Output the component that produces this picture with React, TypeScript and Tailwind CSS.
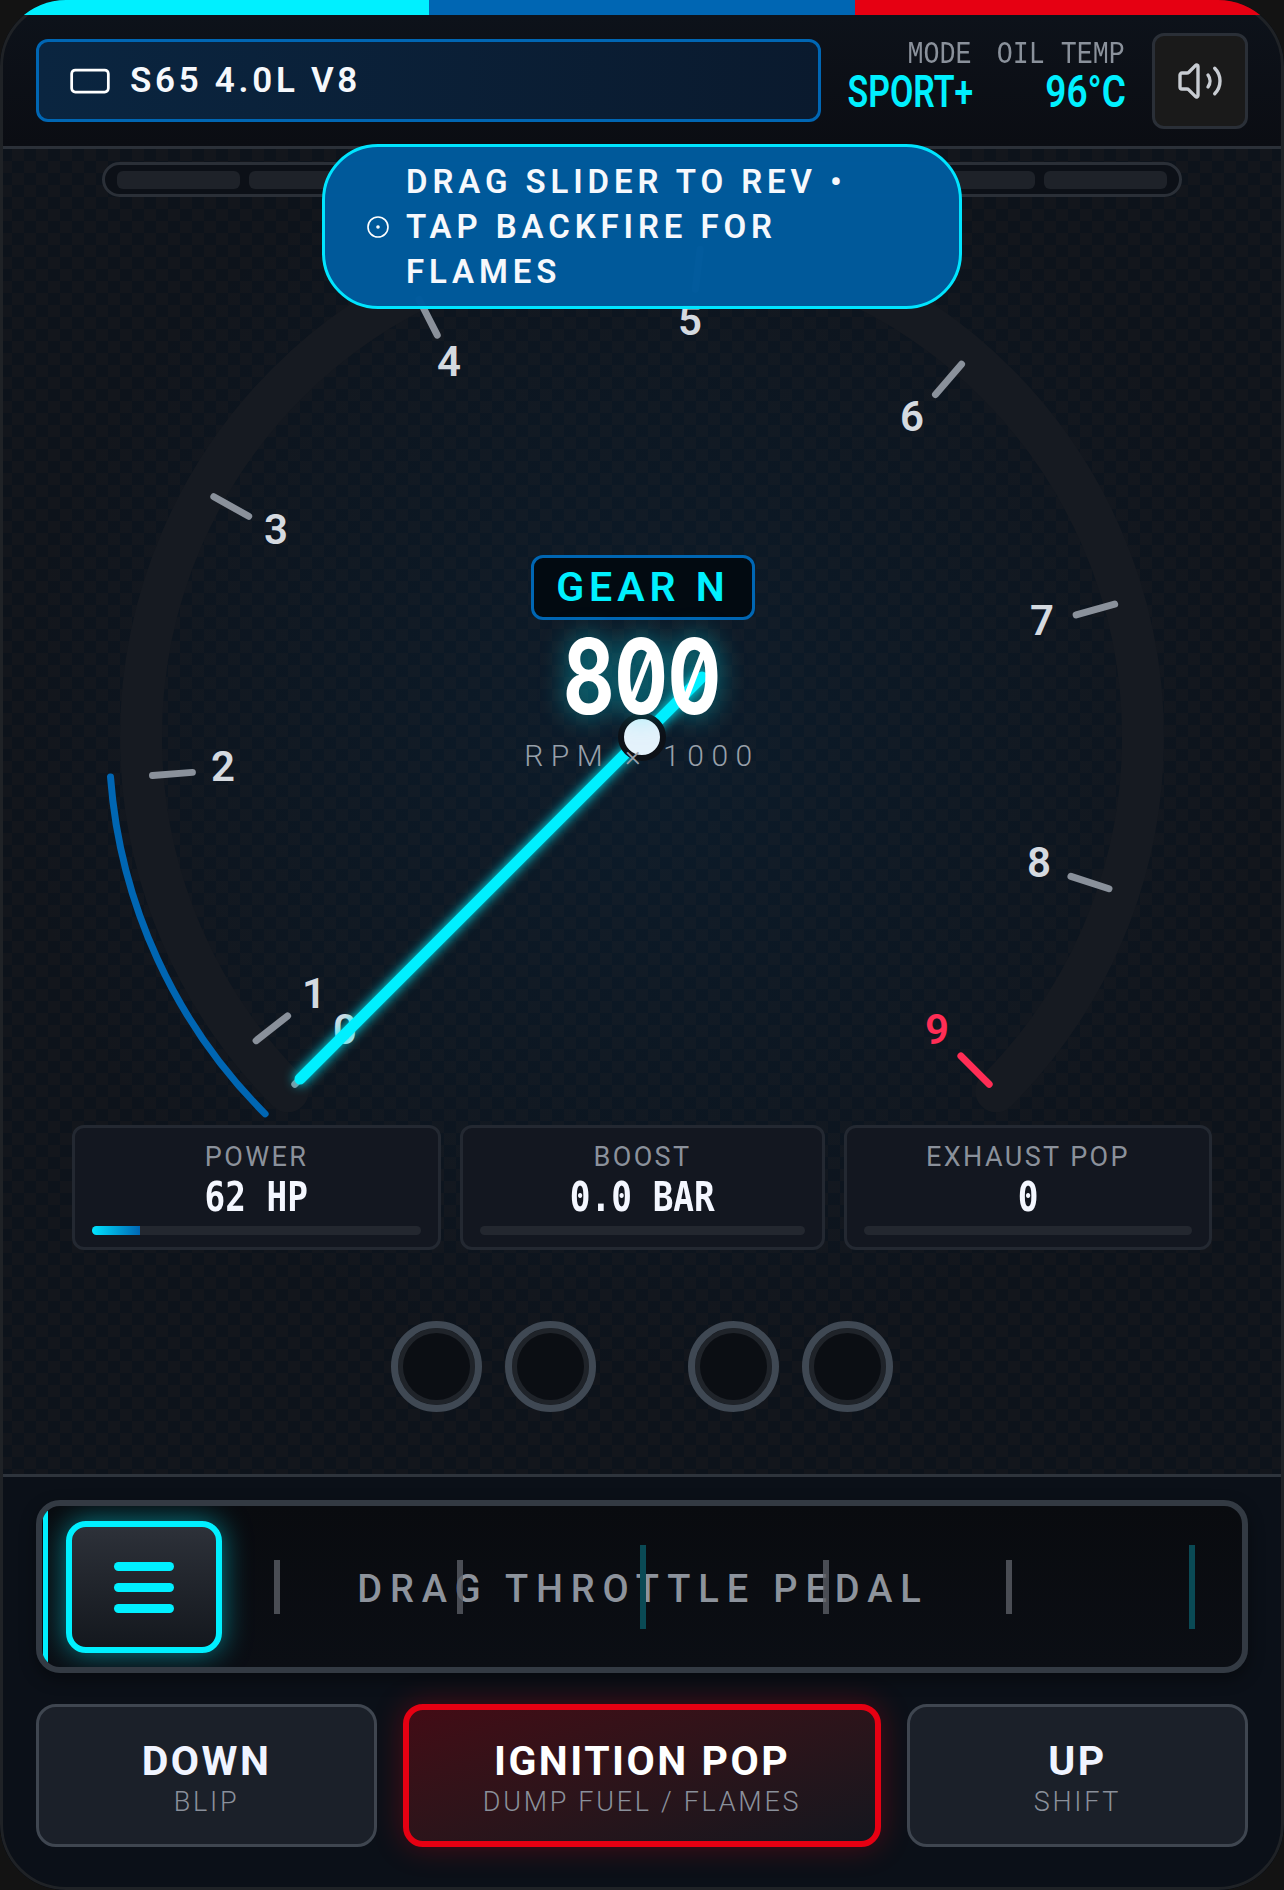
import { CircleDot, RectangleHorizontal, Volume2 } from "lucide-react";

const CX = 642;
const CY = 737;
const pt = (deg: number, r: number) => {
  const a = ((deg - 135 - 90) * Math.PI) / 180;
  return [CX + r * Math.cos(a), CY + r * Math.sin(a)];
};
const arc = (from: number, to: number, r: number) => {
  const [x1, y1] = pt(from, r);
  const [x2, y2] = pt(to, r);
  return `M ${x1} ${y1} A ${r} ${r} 0 ${to - from > 180 ? 1 : 0} 1 ${x2} ${y2}`;
};

const ticks = [0, 6.8, 40.5, 74.3, 108, 141.8, 175.6, 209.3, 243, 270];
const labels: [number, number][] = [
  [345, 1029], [314, 993], [223, 766], [276, 529], [449, 361],
  [690, 320], [912, 416], [1042, 620], [1039, 862], [937, 1029],
];

function Stat({ label, value, fill }: { label: string; value: string; fill?: boolean }) {
  return (
    <div className="h-[125px] rounded-xl border-[3px] border-[#232831] bg-[#131720] px-[17px] pt-[13px] flex flex-col items-center">
      <div className="text-[27px] leading-[32px] tracking-[2.4px] text-[#8b919b]">{label}</div>
      <div className="mt-[1px] text-[40px] leading-[46px] font-bold text-[#f4f7ff] scale-x-[.86] whitespace-pre [font-family:'DejaVu_Sans_Mono',monospace]">
        {value}
      </div>
      <div className="mt-[6px] h-[9px] w-full rounded-full bg-[#23272f] overflow-hidden">
        {fill && <div className="h-full w-[48px] bg-gradient-to-r from-[#00e5ff] to-[#0066b3]" />}
      </div>
    </div>
  );
}

function Light() {
  return (
    <div className="size-[91px] rounded-full border-[7px] border-[#3f4853] bg-[#0b0e13] shadow-[inset_0_0_0_5px_#1f2329]" />
  );
}

function ActionButton({ title, sub, hot }: { title: string; sub: string; hot?: boolean }) {
  return (
    <div
      className={
        hot
          ? "rounded-[20px] border-[6px] border-[#e60012] bg-gradient-to-br from-[#420b15] to-[#14161e] shadow-[0_0_30px_rgba(230,0,18,0.3)] flex flex-col items-center justify-center pt-[3px]"
          : "rounded-[20px] border-[3px] border-[#3f4650] bg-[#1b2029] flex flex-col items-center justify-center pt-[3px]"
      }
    >
      <div className={`text-[41px] leading-[48px] font-bold tracking-[2.5px] ${hot ? "text-white" : "text-[#f0f4ff]"}`}>{title}</div>
      <div className="text-[27px] leading-[32px] mt-[1px] tracking-[2.7px] font-light text-[#8a909b]">{sub}</div>
    </div>
  );
}

function ScaleMark({ tall }: { tall?: boolean }) {
  return <div className={tall ? "w-[6px] h-[84px] bg-[#0a4a55]" : "w-[6px] h-[54px] bg-[#5a5e65]/80"} />;
}

export default function App() {
  return (
    <div className="w-[1284px] h-[1890px] bg-[#131313] text-white [font-family:Roboto,sans-serif]">
      <div className="relative w-full h-full rounded-[66px] overflow-hidden flex flex-col bg-[#0c1119]">
        {/* top strip */}
        <div className="relative z-10 flex h-[15px] shrink-0">
          <div className="w-[429px] bg-[#00f0ff]" />
          <div className="w-[426px] bg-[#0066b3]" />
          <div className="flex-1 bg-[#e60012]" />
        </div>

        {/* header */}
        <div className="h-[134px] shrink-0 border-b-[3px] border-[#2b3038] bg-gradient-to-b from-[#0d121a] to-[#0b0d13] px-[36px] flex items-center">
          <div className="w-[785px] h-[83px] shrink-0 rounded-xl border-[3px] border-[#0066b3] bg-gradient-to-r from-[#0a2540] to-[#0a1a2e] flex items-center pl-[29px] gap-[18px]">
            <RectangleHorizontal size={44} strokeWidth={1.5} className="text-white" />
            <span className="pt-[2px] text-[35px] font-semibold tracking-[3.7px] text-[#f6f8fc]">S65 4.0L V8</span>
          </div>
          <div className="ml-auto -mt-[8px] flex gap-[26px] text-right">
            <div className="w-[124px] flex flex-col items-end">
              <div className="mt-[2px] text-[31px] leading-[30px] text-[#8a919b] scale-x-[.86] origin-right whitespace-nowrap [font-family:'Liberation_Mono',monospace]">MODE</div>
              <div className="-mt-[2px] translate-x-[2px] text-[44px] leading-[48px] font-semibold text-[#00f0ff] scale-x-[.77] origin-right whitespace-nowrap">SPORT+</div>
            </div>
            <div className="w-[128px] flex flex-col items-end">
              <div className="mt-[2px] text-[31px] leading-[30px] text-[#8a919b] scale-x-[.86] origin-right whitespace-nowrap [font-family:'Liberation_Mono',monospace]">OIL TEMP</div>
              <div className="-mt-[2px] translate-x-[1px] text-[44px] leading-[48px] font-semibold text-[#00f0ff] scale-x-[.84] origin-right whitespace-nowrap">96°C</div>
            </div>
          </div>
          <div className="ml-[27px] size-[96px] shrink-0 rounded-xl border-[3px] border-[#2a2f37] bg-[#1a1a1a] flex items-center justify-center">
            <Volume2 size={48} strokeWidth={1.7} className="text-[#c8ccd2]" />
          </div>
        </div>

        {/* main */}
        <div className="relative flex-1 flex flex-col bg-[repeating-conic-gradient(#13161c_0_25%,#0d131b_0_50%)] bg-[length:24px_24px]">
          <div className="absolute inset-0 bg-[radial-gradient(circle_at_50%_45%,rgba(0,102,179,0.10),transparent_65%)]" />

          {/* rev strip */}
          <div className="relative mt-[13px] mx-[102px] h-[35px] rounded-full border-[3px] border-[#2a2f37] bg-[#0c1017] flex items-center gap-[9px] px-[12px]">
            {Array.from({ length: 8 }).map((_, i) => (
              <div key={i} className="flex-1 h-[18px] rounded-md bg-[#1e2229]" />
            ))}
          </div>

          {/* gauge */}
          <div className="relative h-[928px] shrink-0">
            <svg className="absolute inset-0 overflow-visible" width="1284" height="929" viewBox="0 197 1284 929">
              <path d={arc(0, 270, 501)} fill="none" stroke="#161a21" strokeWidth="42" strokeLinecap="round" />
              <path d={arc(0, 40.7, 533)} fill="none" stroke="#0066b3" strokeWidth="7" strokeLinecap="round" />
              {ticks.map((t, i) => {
                const [x1, y1] = pt(t, 451);
                const [x2, y2] = pt(t, 491);
                return (
                  <line key={i} x1={x1} y1={y1} x2={x2} y2={y2} stroke={i === 9 ? "#ff2d55" : "#8a919b"} strokeWidth="7" strokeLinecap="round" />
                );
              })}
              {labels.map(([x, y], i) => (
                <text key={i} x={x} y={y + 15} textAnchor="middle" fontSize="42" fontWeight="600" fill={i === 9 ? "#ff2d55" : "#d5dae0"} fontFamily="Roboto, sans-serif">
                  {i}
                </text>
              ))}
              <line x1="300" y1="1079" x2="702" y2="677" stroke="#00f0ff" strokeWidth="11" strokeLinecap="round" className="drop-shadow-[0_0_6px_#00f0ff]" />
              <circle cx={CX} cy={CY} r="21" fill="#e4f2fb" stroke="#0d1117" strokeWidth="6" />
            </svg>

            {/* readout */}
            <div className="absolute top-[358px] inset-x-0 flex flex-col items-center">
              <div className="ml-[2px] w-[224px] h-[65px] rounded-xl border-[3px] border-[#0066b3] bg-[#020a11] flex items-center justify-center text-[41px] font-semibold tracking-[5px] text-[#00f0ff]">
                GEAR N
              </div>
              <div className="mt-[2px] text-[104px] leading-[108px] font-bold text-white scale-x-[.76] [font-family:Inter,sans-serif] [font-feature-settings:'zero'] [text-shadow:0_0_30px_rgba(0,240,255,0.5)]">
                800
              </div>
              <div className="mt-[8px] text-[30px] leading-[36px] font-light tracking-[7.5px] text-[#98a0aa]">RPM × 1000</div>
            </div>
          </div>

          {/* stats */}
          <div className="relative ml-[72px] grid grid-cols-[369px_365px_368px] gap-x-[19px]">
            <Stat label="POWER" value="62 HP" fill />
            <Stat label="BOOST" value="0.0 BAR" />
            <Stat label="EXHAUST POP" value="0" />
          </div>

          {/* lights */}
          <div className="relative mt-[71px] flex justify-center gap-[92px]">
            <div className="flex gap-[23px]"><Light /><Light /></div>
            <div className="flex gap-[23px]"><Light /><Light /></div>
          </div>
        </div>

        {/* controls */}
        <div className="relative h-[416px] shrink-0 border-t-[3px] border-[#2e343c] bg-[#0b1018] px-[36px] pt-[23px]">
          <div className="relative h-[173px] rounded-3xl border-[6px] border-[#333a43] bg-gradient-to-b from-[#090b0f] to-[#0b0e14] shadow-[0_6px_16px_rgba(0,0,0,0.4)] overflow-hidden">
            <div className="absolute left-[1px] top-[5px] bottom-[4px] w-[5px] bg-[#00f0ff]" />
            <div className="absolute inset-0 flex items-center justify-center pt-[6px] pl-[2px] text-[38px] font-medium tracking-[7.9px] text-[#8d939c]">
              DRAG THROTTLE PEDAL
            </div>
            <div className="absolute left-[232px] right-[47px] inset-y-0 flex items-center justify-between">
              <ScaleMark />
              <ScaleMark />
              <ScaleMark tall />
              <ScaleMark />
              <ScaleMark />
              <ScaleMark tall />
            </div>
            <div className="absolute left-[24px] top-[15px] w-[156px] h-[132px] rounded-[20px] border-[6px] border-[#00f0ff] bg-gradient-to-b from-[#2d3139] to-[#14181e] shadow-[0_0_28px_rgba(0,240,255,0.5)] flex flex-col items-center justify-center gap-[12px]">
              <div className="w-[60px] h-[9px] rounded-full bg-[#00f0ff]" />
              <div className="w-[60px] h-[9px] rounded-full bg-[#00f0ff]" />
              <div className="w-[60px] h-[9px] rounded-full bg-[#00f0ff]" />
            </div>
          </div>
          <div className="mt-[31px] h-[143px] grid grid-cols-[341px_478px_341px] gap-x-[26px]">
            <ActionButton title="DOWN" sub="BLIP" />
            <ActionButton title="IGNITION POP" sub="DUMP FUEL / FLAMES" hot />
            <ActionButton title="UP" sub="SHIFT" />
          </div>
        </div>

        {/* tooltip */}
        <div className="absolute z-10 left-[322px] top-[144px] w-[640px] h-[165px] rounded-[56px] border-[3px] border-[#00e5ff] bg-[#005a9c]/[.985] flex items-center pl-[41px] gap-[16px]">
          <CircleDot size={24} className="text-white shrink-0" strokeWidth={1.6} />
          <div className="text-[33px] leading-[45px] font-semibold tracking-[4.9px] whitespace-nowrap text-[#f6f8fc]">
            <div>DRAG SLIDER TO REV •</div>
            <div>TAP BACKFIRE FOR</div>
            <div>FLAMES</div>
          </div>
        </div>

        {/* frame edge */}
        <div className="absolute inset-0 rounded-[66px] border-[3px] border-[#1f2226] pointer-events-none" />
      </div>
    </div>
  );
}
